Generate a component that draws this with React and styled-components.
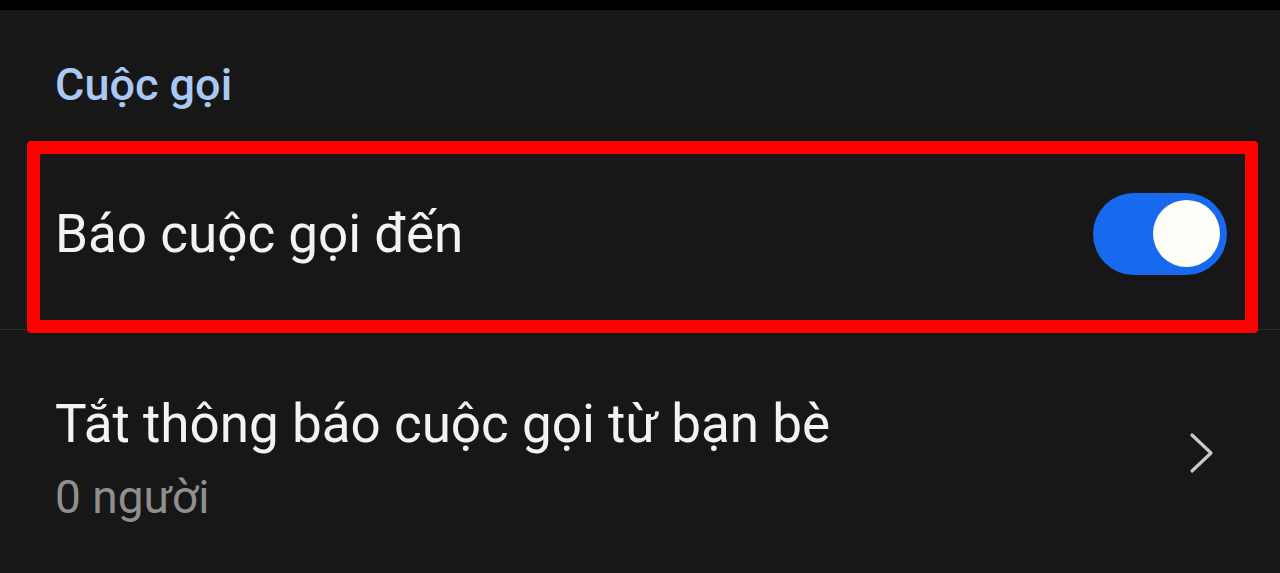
import React from 'react';
import styled, { createGlobalStyle } from 'styled-components';

const GlobalStyle = createGlobalStyle`
    html, body {
        margin: 0;
        padding: 0;
        background: #171717;
    }
    body {
        font-family: Roboto, "Noto Sans", "Liberation Sans", sans-serif;
        -webkit-font-smoothing: antialiased;
    }
`;

const StyledPage = styled.div`
    width: 1280px;
    height: 573px;
    overflow: hidden;
    background: #171717;
    display: flex;
    flex-direction: column;
`;

const StyledStatusStrip = styled.div`
    height: 10px;
    background: #000;
    flex-shrink: 0;
`;

const StyledSectionTitle = styled.div`
    box-sizing: border-box;
    height: 130px;
    padding: 52px 0 0 55px;
    font-size: 45px;
    line-height: 45px;
    font-weight: 500;
    color: #a9c8f3;
`;

const StyledList = styled.div`
    position: relative;
    display: flex;
    flex-direction: column;
`;

const StyledRow = styled.div`
    box-sizing: border-box;
    display: flex;
    align-items: ${(p) => (p.$top ? 'flex-start' : 'center')};
    justify-content: space-between;
    height: ${(p) => p.$height}px;
    padding: ${(p) => p.$padding};
    border-bottom: ${(p) => (p.$divider ? '1px solid #2f2f2f' : 'none')};
`;

const StyledText = styled.div`
    display: flex;
    flex-direction: column;
    gap: 23px;
`;

const StyledTitle = styled.div`
    font-size: 53px;
    line-height: 53px;
    color: #f3f3f3;
    white-space: nowrap;
`;

const StyledSubtitle = styled.div`
    font-size: 46px;
    line-height: 46px;
    color: #8f8f8f;
`;

const StyledSwitch = styled.div`
    box-sizing: border-box;
    width: 134px;
    height: 82px;
    border-radius: 41px;
    background: #176af0;
    display: flex;
    align-items: center;
    justify-content: flex-end;
    padding-right: 7px;
    margin-top: -2px;
`;

const StyledKnob = styled.div`
    width: 67px;
    height: 67px;
    border-radius: 50%;
    background: #fffffa;
`;

const StyledChevron = styled.svg`
    width: 26px;
    height: 42px;
    margin-top: 34px;
`;

// red annotation frame drawn over the first row
const StyledHighlight = styled.div`
    position: absolute;
    box-sizing: border-box;
    left: 27px;
    top: 1px;
    width: 1231px;
    height: 192px;
    border: 13px solid #ff0000;
    border-radius: 4px;
    pointer-events: none;
`;

const Toggle = ({ on }) => (
    <StyledSwitch>
        {on && <StyledKnob />}
    </StyledSwitch>
);

const Chevron = () => (
    <StyledChevron viewBox="0 0 26 42">
        <polyline
            points="3,3 22,21 3,39"
            fill="none"
            stroke="#c9c9c9"
            strokeWidth="3.2"
            strokeLinecap="round"
            strokeLinejoin="round"
        />
    </StyledChevron>
);

function App() {
    return (
        <>
            <GlobalStyle />
            <StyledPage>
                <StyledStatusStrip />
                <StyledSectionTitle>Cuộc gọi</StyledSectionTitle>
                <StyledList>
                    <StyledRow $height={190} $padding="0 53px 0 55px" $divider>
                        <StyledTitle>Báo cuộc gọi đến</StyledTitle>
                        <Toggle on />
                    </StyledRow>
                    <StyledRow $height={243} $padding="68px 65px 0 55px" $top>
                        <StyledText>
                            <StyledTitle>Tắt thông báo cuộc gọi từ bạn bè</StyledTitle>
                            <StyledSubtitle>0 người</StyledSubtitle>
                        </StyledText>
                        <Chevron />
                    </StyledRow>
                    <StyledHighlight />
                </StyledList>
            </StyledPage>
        </>
    );
}

export default App;
